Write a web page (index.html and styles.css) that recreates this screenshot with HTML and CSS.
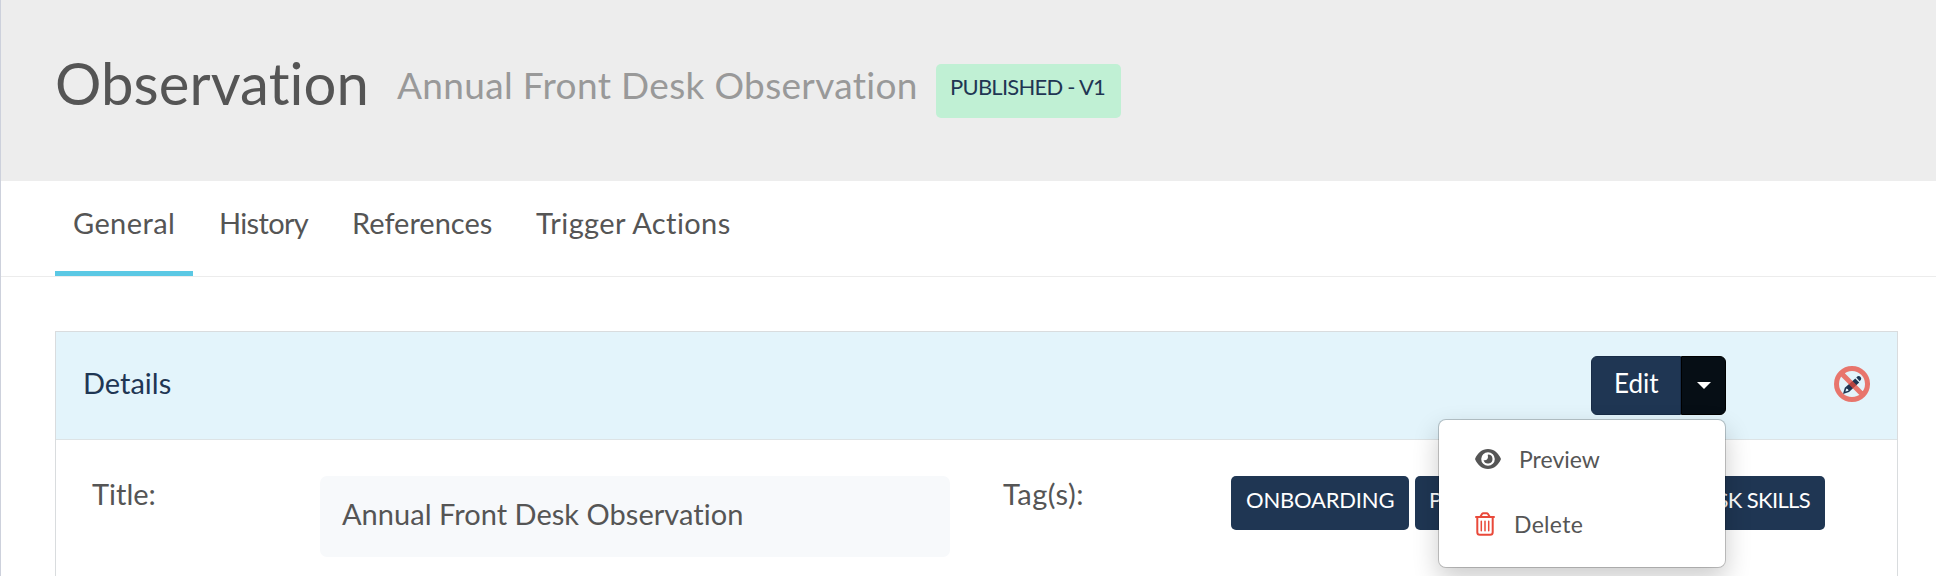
FILE: index.html
```html
<!DOCTYPE html>
<html lang="en">
<head>
<meta charset="utf-8">
<title>Observation</title>
<link rel="stylesheet" href="styles.css">
</head>
<body>
<div class="page">
  <header class="page-header">
    <h1 class="page-title"><span>Observation</span></h1>
    <div class="page-subtitle"><span>Annual Front Desk Observation</span></div>
    <div class="status"><span>PUBLISHED - V1</span></div>
  </header>
  <nav class="tabs">
    <a class="tab tab-general active"><span>General</span></a>
    <a class="tab tab-history"><span>History</span></a>
    <a class="tab tab-references"><span>References</span></a>
    <a class="tab tab-actions"><span>Trigger Actions</span></a>
  </nav>
  <section class="card">
    <div class="card-header">
      <h2 class="card-title"><span>Details</span></h2>
      <div class="actions">
        <button class="btn btn-edit"><span>Edit</span></button>
        <button class="btn btn-toggle" aria-label="More"><svg width="14" height="7" viewBox="0 0 14 7"><path d="M0 0h14L7 7z" fill="#fff"/></svg></button>
        <div class="menu">
          <a class="menu-item preview">
            <svg width="26" height="20" viewBox="0 0 26 20"><path fill="#555" fill-rule="evenodd" d="M13 0C19 0 23.500 4 26 10 23.500 16 19 20 13 20S2.500 16 0 10C2.500 4 7 0 13 0zM13 3.200a6.800 6.800 0 1 0 0 13.600 6.800 6.800 0 0 0 0-13.600z"/><path fill="#555" d="M13 5.500a4.500 4.500 0 1 1-4.400 5.500c2.400.9 4.600-1 4.400-3.200-.1-.8-.4-1.600 0-2.300z"/></svg>
            <span>Preview</span>
          </a>
          <a class="menu-item delete">
            <svg width="20" height="24" viewBox="0 0 20 24" fill="none" stroke="#e9493a"><path stroke-width="2" stroke-linecap="round" d="M1 5h18M5.500 4.500L7 2q.5-.8 1.400-.8h3.200q.9 0 1.400.8l1.500 2.500M2.300 5.500v14.700q0 2.600 2.600 2.600h10.200q2.600 0 2.600-2.600V5.500"/><path stroke-width="1.500" stroke-linecap="round" d="M6.300 9.300v9.400M10 9.300v9.400M13.700 9.300v9.400"/></svg>
            <span>Delete</span>
          </a>
        </div>
      </div>
      <svg class="no-edit" width="36" height="36" viewBox="0 0 36 36"><g fill="#1f3653"><path d="M22.300 11.400l1.300-1.100q1.500-.9 2.800.4 1.500 1.500.5 3l-1.200 1.500z"/><path fill-rule="evenodd" d="M21.300 12.500l3.900 3.900L15 26l-6 2 1.800-6.200zM12.300 22.500l-.9 3.100 3.100-.9-.5-1.500z"/></g><g fill="none" stroke="#e9493a" stroke-opacity=".74" stroke-width="5"><path d="M18 2.500a15.500 15.500 0 1 1 0 31 15.500 15.500 0 0 1 0-31zM8.800 8.800l18.400 18.400"/></g></svg>
    </div>
    <div class="card-body">
      <div class="label label-title"><span>Title:</span></div>
      <div class="field"><span>Annual Front Desk Observation</span></div>
      <div class="label label-tags"><span>Tag(s):</span></div>
      <div class="tags">
        <div class="tag tag-onboarding"><span>ONBOARDING</span></div>
        <div class="tag tag-fill"><span>P</span></div>
        <div class="tag tag-skills"><span>FRONT DESK SKILLS</span></div>
      </div>
    </div>
  </section>
</div>
</body>
</html>
```
FILE: styles.css
```css
* { box-sizing: border-box; }
body { margin: 0; height: 576px; overflow: hidden; background: #fff; color: #555; font-family: Lato, "Liberation Sans", sans-serif; font-variant-ligatures: none; }
h1, h2 { margin: 0; font-weight: 400; }
span { white-space: nowrap; }
.page { height: 576px; border-left: 1px solid #cdd1dc; overflow: hidden; }

.page-header { display: flex; align-items: flex-start; height: 181px; padding: 50px 0 0 54px; background: #ededed; }
.page-title { width: 342px; font-size: 58px; line-height: 65px; letter-spacing: .1px; }
.page-subtitle { width: 539px; margin-top: 12px; font-size: 37px; line-height: 46px; letter-spacing: .34px; color: #999; }
.status { width: 185px; height: 54px; margin-top: 14px; padding-left: 14px; border-radius: 5px; background: #c0f0d4; color: #1f3653; font-size: 22px; line-height: 46px; letter-spacing: -.75px; }

.tabs { display: flex; gap: 8px; height: 96px; padding-left: 54px; border-bottom: 1px solid #ececec; }
.tab { height: 95px; padding-left: 18px; border-bottom: 5px solid transparent; font-size: 29px; line-height: 83px; }
.tab.active { border-color: #5bc8e4; }
.tab-general { width: 138px; letter-spacing: .4px; }
.tab-history { width: 125px; letter-spacing: -.65px; }
.tab-references { width: 175px; }
.tab-actions { padding-left: 19px; letter-spacing: .4px; }

.card { width: 1843px; height: 300px; margin: 54px 0 0 54px; border: 1px solid #d9dcde; }
.card-header { display: flex; height: 108px; padding: 24px 27px 0 27px; border-bottom: 1px solid #dde3e5; background: #e3f4fb; }
.card-title { flex: 1; color: #1f3653; font-size: 29px; line-height: 54px; }
.actions { position: relative; display: flex; width: 135px; height: 59px; margin-right: 108px; }
.btn { display: flex; padding: 0; border: 1px solid #182c47; background: #1f3653; color: #fff; font: 26px/52px Lato, "Liberation Sans", sans-serif; }
.btn-edit { width: 90px; padding-left: 22px; border-radius: 6px 0 0 6px; }
.btn-toggle { width: 45px; align-items: center; justify-content: center; border-color: #000; border-radius: 0 6px 6px 0; background: #060e15; }
.no-edit { margin-top: 10px; }

.menu { position: absolute; z-index: 2; top: 63px; right: 0; width: 288px; height: 149px; padding: 6px 0 0 36px; border: 1px solid rgba(0,0,0,.2); border-radius: 8px; background: #fff; background-clip: padding-box; box-shadow: 0 11px 26px rgba(0,0,0,.2); }
.menu-item { display: flex; align-items: center; height: 65px; font-size: 23px; line-height: 30px; }
.preview { gap: 18px; }
.delete { gap: 19px; letter-spacing: .3px; }

.card-body { display: flex; align-items: flex-start; padding: 36px 72px 0 36px; }
.label { font-size: 29px; line-height: 36px; }
.label-title { width: 228px; }
.field { width: 630px; height: 81px; padding-left: 22px; border-radius: 7px; background: #f7f9fb; font-size: 29px; line-height: 76px; letter-spacing: .03px; }
.label-tags { width: 228px; margin-left: 53px; letter-spacing: .5px; }
.tags { display: flex; flex: 1; gap: 6px; }
.tag { height: 54px; padding: 0 15px; border-radius: 5px; background: #1f3653; color: #fff; font-size: 22px; line-height: 48px; letter-spacing: -.2px; }
.tag-onboarding { width: 178px; }
.tag-fill { flex: 1; padding-left: 14px; }
.tag-skills { letter-spacing: -.65px; }
```
